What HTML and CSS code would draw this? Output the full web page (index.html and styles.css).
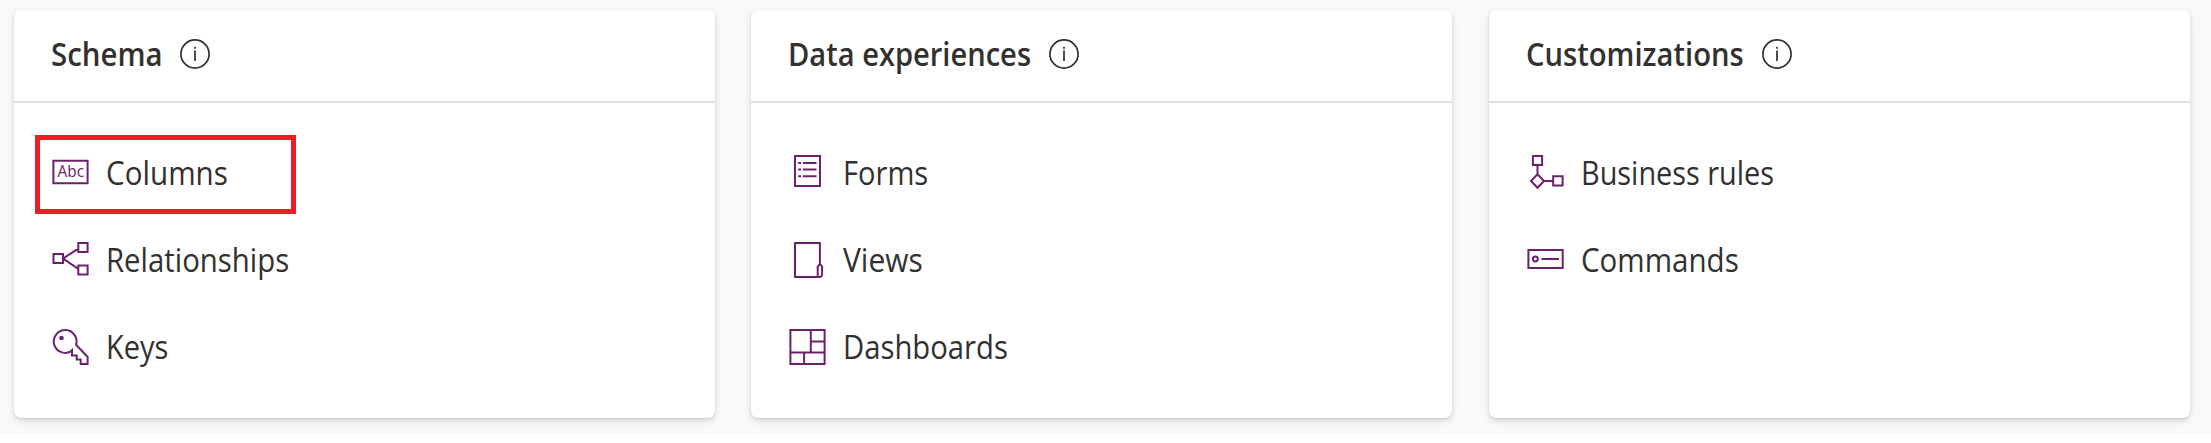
FILE: index.html
```
<!DOCTYPE html>
<html lang="en">
<head>
<meta charset="utf-8">
<title>Table overview</title>
<link rel="stylesheet" href="styles.css">
</head>
<body>
<main class="board">
  <section class="card">
    <header class="card-header">
      <h2 class="title title-schema">Schema</h2>
      <svg class="info" viewBox="0 0 30 30"><circle cx="15" cy="15" r="14.1"/><path d="M15 11.5V22M15 7.8V9.8"/></svg>
    </header>
    <ul class="list">
      <li class="row highlighted">
        <svg class="icon" viewBox="0 0 40 40"><path d="M3.4 8.7H37.6V31.2H3.4Z"/><text class="abc" x="7.5" y="25.3" textLength="26.5" lengthAdjust="spacingAndGlyphs">Abc</text></svg>
        <span class="label l-columns">Columns</span>
      </li>
      <li class="row">
        <svg class="icon" viewBox="0 0 40 40"><path d="M3.5 15.1H13V24.1H3.5ZM28.3 4H37.6V13H28.3ZM28.3 26.4H37.6V35.6H28.3ZM28.3 9.6L13 19.6L28.3 29.8"/></svg>
        <span class="label l-relationships">Relationships</span>
      </li>
      <li class="row">
        <svg class="icon" viewBox="0 0 40 40"><path d="M26.1 18.8L37.6 31V37.9H30.7V33.5H26.7V29.5H22V24.1L20.8 25.4A11.4 11.4 0 1 1 26.1 18.8Z"/><circle class="solid" cx="11.5" cy="12" r="2.3"/></svg>
        <span class="label l-keys">Keys</span>
      </li>
    </ul>
  </section>
  <section class="card">
    <header class="card-header">
      <h2 class="title title-data">Data experiences</h2>
      <svg class="info" viewBox="0 0 30 30"><circle cx="15" cy="15" r="14.1"/><path d="M15 11.5V22M15 7.8V9.8"/></svg>
    </header>
    <ul class="list">
      <li class="row">
        <svg class="icon" viewBox="0 0 40 40"><path d="M8 4H33V33.9H8ZM15.8 11H29.5M15.8 17.6H29.5M15.8 24.3H29.5M11.2 11H14M11.2 17.6H14M11.2 24.3H14"/></svg>
        <span class="label l-forms">Forms</span>
      </li>
      <li class="row">
        <svg class="icon" viewBox="0 0 40 40"><path d="M32.9 25V4H8V37.9H33.3Q35.1 37.4 35.1 35.2V27.5L32.9 24.8L30.7 27.5V37.9"/></svg>
        <span class="label l-views">Views</span>
      </li>
      <li class="row">
        <svg class="icon" viewBox="0 0 40 40"><path d="M3.4 4H37.6V37.9H3.4ZM23.8 4V26.5M3.4 26.5H37.6M23.8 15.4H37.6M17.1 26.5V37.9"/></svg>
        <span class="label l-dashboards">Dashboards</span>
      </li>
    </ul>
  </section>
  <section class="card card-last">
    <header class="card-header">
      <h2 class="title title-custom">Customizations</h2>
      <svg class="info" viewBox="0 0 30 30"><circle cx="15" cy="15" r="14.1"/><path d="M15 11.5V22M15 7.8V9.8"/></svg>
    </header>
    <ul class="list">
      <li class="row">
        <svg class="icon" viewBox="0 0 40 40"><path d="M7.9 4H17.1V13H7.9ZM12.5 13V22.5M12.5 22.3L19 29L12.5 35.7L6 29ZM19 29H28.2M28.2 24.3H37.6V33.6H28.2Z"/></svg>
        <span class="label l-business">Business rules</span>
      </li>
      <li class="row">
        <svg class="icon" viewBox="0 0 40 40"><path d="M3.4 11.1H37.7V28.9H3.4ZM16.5 20H34"/><circle cx="10.4" cy="20" r="2.4"/></svg>
        <span class="label l-commands">Commands</span>
      </li>
    </ul>
  </section>
</main>
</body>
</html>
```
FILE: styles.css
```
*, *::after { box-sizing: border-box; }
body {
  margin: 0;
  background: #fff;
  color: #323130;
  font-family: "Open Sans", "Noto Sans", sans-serif;
}
.board {
  display: flex;
  gap: 36px;
  height: 434px;
  padding: 10px 0 16px 14px;
  background: #faf9f8;
}
.card {
  flex: none;
  width: 701px;
  background: #fff;
  border-radius: 7px;
  box-shadow: 0 3px 7px rgba(0, 0, 0, .13), 0 1px 2px rgba(0, 0, 0, .11);
}
.card-last { margin-left: 1px; }
.card-header {
  display: flex;
  align-items: center;
  height: 93px;
  padding: 2px 36px 6px 37px;
  border-bottom: 2px solid #e1e1e1;
}
.title {
  margin: 0;
  font-size: 32px;
  line-height: 44px;
  font-weight: 600;
  white-space: nowrap;
  transform-origin: 0 50%;
}
.title-schema { width: 112px; transform: scaleX(.92); }
.title-data { width: 244px; transform: scaleX(.909); }
.title-custom { width: 219px; transform: scaleX(.912); }
.info {
  flex: none;
  width: 30px;
  height: 30px;
  margin-left: 17px;
  fill: none;
  stroke: #323130;
  stroke-width: 1.7;
}
.list {
  margin: 0;
  padding: 25px 0 0 36px;
  list-style: none;
}
.row {
  position: relative;
  display: flex;
  align-items: center;
  height: 87px;
}
.highlighted::after {
  content: "";
  position: absolute;
  left: -15px;
  top: 7px;
  width: 261px;
  height: 79px;
  border: 5px solid #ee1c24;
}
.icon {
  flex: none;
  width: 40px;
  height: 40px;
  margin-right: 16px;
  fill: none;
  stroke: #6c216d;
  stroke-width: 2;
}
.icon .solid { fill: #6c216d; stroke: none; }
.abc {
  fill: #6c216d;
  stroke: none;
  font-size: 15.5px;
}
.label {
  padding-top: 2px;
  font-size: 32px;
  line-height: 44px;
  white-space: nowrap;
  transform-origin: 0 50%;
}
.l-columns { transform: scaleX(.926); }
.l-relationships { transform: scaleX(.917); }
.l-keys { transform: scaleX(.905); }
.l-forms { transform: scaleX(.909); }
.l-views { transform: scaleX(.935); }
.l-dashboards { transform: scaleX(.914); }
.l-business { transform: scaleX(.902); }
.l-commands { transform: scaleX(.923); }
```
